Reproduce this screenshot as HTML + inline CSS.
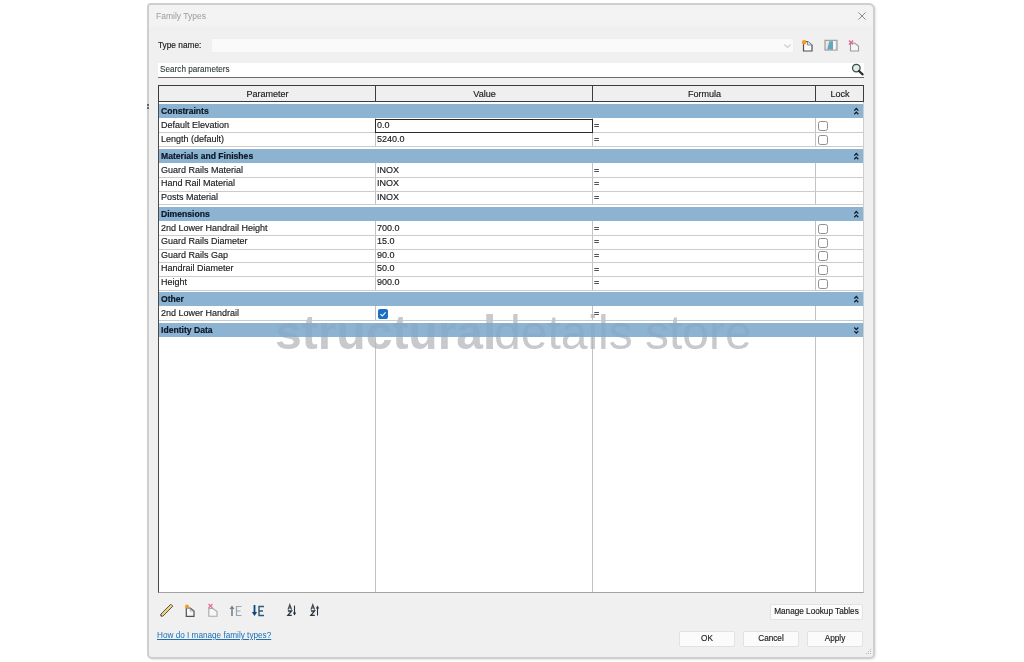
<!DOCTYPE html>
<html><head><meta charset="utf-8">
<style>
*{margin:0;padding:0;box-sizing:border-box}
html,body{width:1024px;height:662px;overflow:hidden;background:#fff;font-family:"Liberation Sans",sans-serif;font-size:10px;color:#1e1e1e}
.a{position:absolute}
#dlg{left:147px;top:3px;width:728px;height:656px;background:#f0f0f0;border:2px solid #cfcfcf;border-radius:4px 6px 5px 5px;box-shadow:1px 1px 2px rgba(0,0,0,0.10)}
.t{position:absolute;white-space:nowrap;line-height:12px}
.hdr{background:#efefef;border:1px solid #3c3c3c;}
.band{background:#8db3d3;height:14px}
.tx{font-size:9px;color:#1a1a1a;-webkit-text-stroke:0.15px #1a1a1a}
.bt{font-weight:bold;color:#0a1826;font-size:8.6px;-webkit-text-stroke:0.2px #0a1826}
.rl{height:1px;background:#cbcbcb}
.vl{width:1px;background:#c2c2c2}
.btn{background:#fbfbfb;border:1px solid #e2e2e2;border-radius:2px;text-align:center;line-height:14px;font-size:8.2px;color:#1a1a1a;white-space:nowrap;-webkit-text-stroke:0.15px #1a1a1a}
.cb{width:10px;height:10px;border:1.2px solid #8e8e8e;border-radius:2.5px;background:#fff}
.hd{font-size:9.05px;color:#1a1a1a;-webkit-text-stroke:0.15px #1a1a1a}
</style></head><body>
<div id="dlg" class="a"></div>
<div class="a" style="left:147px;top:103.5px;width:2px;height:2px;background:#444;border-radius:1px"></div><div class="a" style="left:147px;top:106.5px;width:2px;height:2px;background:#444;border-radius:1px"></div>
<div class="a" style="left:149px;top:5px;width:724px;height:21px;background:#f3f3f3;border-radius:3px 5px 0 0"></div>
<div class="t" style="left:156px;top:10px;color:#9b9b9b;font-size:8.5px">Family Types</div>
<svg class="a" style="left:857px;top:11px" width="10" height="10" viewBox="0 0 10 10"><path d="M1.4 1.4L8.6 8.6M8.6 1.4L1.4 8.6" stroke="#8c8c8c" stroke-width="1"/></svg>

<div class="t" style="left:158px;top:39px;font-size:8.3px;color:#1a1a1a;-webkit-text-stroke:0.15px #1a1a1a">Type name:</div>
<div class="a" style="left:211px;top:37.5px;width:583px;height:15px;background:#fafafa;border:1px solid #eeeeee"></div>
<svg class="a" style="left:783px;top:42.5px" width="9" height="6" viewBox="0 0 9 6"><path d="M1.3 1.5L4.5 4.5L7.7 1.5" stroke="#cdcdcd" stroke-width="1.2" fill="none"/></svg>
<svg class="a" style="left:798px;top:36px" width="18" height="18" viewBox="0 0 18 18">
<path d="M5.5 5.5H9.5L14 9V15H5.5Z" fill="#fafafa" stroke="#505050" stroke-width="1.2"/>
<path d="M9.5 5.5V9H14" fill="#dfe6ee" stroke="#6a7a8a" stroke-width="0.8"/>
<circle cx="6.2" cy="6.2" r="2.3" fill="#f39a2a"/>
</svg>
<svg class="a" style="left:822px;top:37px" width="18" height="16" viewBox="0 0 18 16">
<rect x="3" y="3.4" width="12" height="9.6" fill="#e8e8e8" stroke="#a4a4a4" stroke-width="1.3"/>
<path d="M5.2 12.6L7.3 4.3H11V12.6Z" fill="#64a6ba"/>
<rect x="11.5" y="4.2" width="1.6" height="8.3" fill="#fff"/>
</svg>
<svg class="a" style="left:845px;top:36px" width="18" height="18" viewBox="0 0 18 18">
<path d="M5.5 7H9.5L13.5 10V15H5.5Z" fill="#f6f6f6" stroke="#9a9a9a" stroke-width="1.1"/>
<path d="M4 4.5L8 8.5M8 4.5L4 8.5" stroke="#e06a8a" stroke-width="1.4"/>
</svg>

<div class="a" style="left:158px;top:63px;width:706px;height:15px;background:#fff;border-bottom:1px solid #6a6a6a"></div>
<div class="t" style="left:160px;top:64px;color:#2a3d33;font-size:8.2px;-webkit-text-stroke:0.1px #2a3d33">Search parameters</div>
<svg class="a" style="left:850px;top:62px" width="15" height="15" viewBox="0 0 15 15">
<circle cx="6.3" cy="6.1" r="3.8" fill="#d9efe8" stroke="#3d4b46" stroke-width="1.3"/>
<path d="M9 9L12.6 12.4" stroke="#2e2e2e" stroke-width="2.2" stroke-linecap="round"/>
</svg>

<div class="a" style="left:158px;top:101px;width:706px;height:492px;background:#fff;border:1px solid #4a4a4a;border-right-color:#cdcdcd;border-bottom-color:#a4a4a4;border-top:none"></div>
<div class="a hdr" style="left:158px;top:85px;width:706px;height:17px"></div>
<div class="a" style="left:375px;top:85px;width:1px;height:17px;background:#3c3c3c"></div>
<div class="a" style="left:592px;top:85px;width:1px;height:17px;background:#3c3c3c"></div>
<div class="a" style="left:815px;top:85px;width:1px;height:17px;background:#3c3c3c"></div>
<div class="t hd" style="left:159px;top:88px;width:217px;text-align:center">Parameter</div>
<div class="t hd" style="left:376px;top:88px;width:217px;text-align:center">Value</div>
<div class="t hd" style="left:593px;top:88px;width:223px;text-align:center">Formula</div>
<div class="t hd" style="left:815.5px;top:88px;width:49px;text-align:center">Lock</div>

<div class="a vl" style="left:375px;top:102px;height:490px"></div>
<div class="a vl" style="left:592px;top:102px;height:490px"></div>
<div class="a vl" style="left:815px;top:102px;height:490px"></div>
<div class="a band" style="left:159px;top:104.4px;width:704px"></div>
<div class="t bt" style="left:161px;top:105.4px">Constraints</div>
<svg class="a" style="left:853px;top:107.0px" width="7" height="9" viewBox="0 0 7 9"><path d="M1.3 3.6L3.3 1.5L5.3 3.6M1.3 7.2L3.3 5.1L5.3 7.2" stroke="#0d1b2a" stroke-width="1.25" fill="none"/></svg>
<div class="a" style="left:159px;top:147.02px;width:704px;height:1.98px;background:#fff"></div>
<div class="a rl" style="left:159px;top:132.36px;width:704px"></div>
<div class="t tx" style="left:161px;top:118.90px">Default Elevation</div>
<div class="t tx" style="left:377px;top:118.90px">0.0</div>
<div class="t tx" style="left:594px;top:119.10px">=</div>
<div class="a cb" style="left:818px;top:121.40px"></div>
<div class="a rl" style="left:159px;top:146.02px;width:704px"></div>
<div class="t tx" style="left:161px;top:132.56px">Length (default)</div>
<div class="t tx" style="left:377px;top:132.56px">5240.0</div>
<div class="t tx" style="left:594px;top:132.76px">=</div>
<div class="a cb" style="left:818px;top:135.06px"></div>
<div class="a band" style="left:159px;top:149px;width:704px"></div>
<div class="t bt" style="left:161px;top:150px">Materials and Finishes</div>
<svg class="a" style="left:853px;top:151.6px" width="7" height="9" viewBox="0 0 7 9"><path d="M1.3 3.6L3.3 1.5L5.3 3.6M1.3 7.2L3.3 5.1L5.3 7.2" stroke="#0d1b2a" stroke-width="1.25" fill="none"/></svg>
<div class="a" style="left:159px;top:205.28px;width:704px;height:1.72px;background:#fff"></div>
<div class="a rl" style="left:159px;top:176.96px;width:704px"></div>
<div class="t tx" style="left:161px;top:163.50px">Guard Rails Material</div>
<div class="t tx" style="left:377px;top:163.50px">INOX</div>
<div class="t tx" style="left:594px;top:163.70px">=</div>
<div class="a rl" style="left:159px;top:190.62px;width:704px"></div>
<div class="t tx" style="left:161px;top:177.16px">Hand Rail Material</div>
<div class="t tx" style="left:377px;top:177.16px">INOX</div>
<div class="t tx" style="left:594px;top:177.36px">=</div>
<div class="a rl" style="left:159px;top:204.28px;width:704px"></div>
<div class="t tx" style="left:161px;top:190.82px">Posts Material</div>
<div class="t tx" style="left:377px;top:190.82px">INOX</div>
<div class="t tx" style="left:594px;top:191.02px">=</div>
<div class="a band" style="left:159px;top:207px;width:704px"></div>
<div class="t bt" style="left:161px;top:208px">Dimensions</div>
<svg class="a" style="left:853px;top:209.6px" width="7" height="9" viewBox="0 0 7 9"><path d="M1.3 3.6L3.3 1.5L5.3 3.6M1.3 7.2L3.3 5.1L5.3 7.2" stroke="#0d1b2a" stroke-width="1.25" fill="none"/></svg>
<div class="a" style="left:159px;top:290.60px;width:704px;height:1.40px;background:#fff"></div>
<div class="a rl" style="left:159px;top:234.96px;width:704px"></div>
<div class="t tx" style="left:161px;top:221.50px">2nd Lower Handrail Height</div>
<div class="t tx" style="left:377px;top:221.50px">700.0</div>
<div class="t tx" style="left:594px;top:221.70px">=</div>
<div class="a cb" style="left:818px;top:224.00px"></div>
<div class="a rl" style="left:159px;top:248.62px;width:704px"></div>
<div class="t tx" style="left:161px;top:235.16px">Guard Rails Diameter</div>
<div class="t tx" style="left:377px;top:235.16px">15.0</div>
<div class="t tx" style="left:594px;top:235.36px">=</div>
<div class="a cb" style="left:818px;top:237.66px"></div>
<div class="a rl" style="left:159px;top:262.28px;width:704px"></div>
<div class="t tx" style="left:161px;top:248.82px">Guard Rails Gap</div>
<div class="t tx" style="left:377px;top:248.82px">90.0</div>
<div class="t tx" style="left:594px;top:249.02px">=</div>
<div class="a cb" style="left:818px;top:251.32px"></div>
<div class="a rl" style="left:159px;top:275.94px;width:704px"></div>
<div class="t tx" style="left:161px;top:262.48px">Handrail Diameter</div>
<div class="t tx" style="left:377px;top:262.48px">50.0</div>
<div class="t tx" style="left:594px;top:262.68px">=</div>
<div class="a cb" style="left:818px;top:264.98px"></div>
<div class="a rl" style="left:159px;top:289.60px;width:704px"></div>
<div class="t tx" style="left:161px;top:276.14px">Height</div>
<div class="t tx" style="left:377px;top:276.14px">900.0</div>
<div class="t tx" style="left:594px;top:276.34px">=</div>
<div class="a cb" style="left:818px;top:278.64px"></div>
<div class="a band" style="left:159px;top:292px;width:704px"></div>
<div class="t bt" style="left:161px;top:293px">Other</div>
<svg class="a" style="left:853px;top:294.6px" width="7" height="9" viewBox="0 0 7 9"><path d="M1.3 3.6L3.3 1.5L5.3 3.6M1.3 7.2L3.3 5.1L5.3 7.2" stroke="#0d1b2a" stroke-width="1.25" fill="none"/></svg>
<div class="a" style="left:159px;top:320.96px;width:704px;height:2.04px;background:#fff"></div>
<div class="a rl" style="left:159px;top:319.96px;width:704px"></div>
<div class="t tx" style="left:161px;top:306.50px">2nd Lower Handrail</div>
<div class="a" style="left:378px;top:308.50px;width:10px;height:10px;background:#1a6fc4;border-radius:2px"></div>
<svg class="a" style="left:378px;top:308.50px" width="10" height="10" viewBox="0 0 10 10"><path d="M2.5 5.2L4.3 7L7.6 3.3" stroke="#fff" stroke-width="1.1" fill="none"/></svg>
<div class="t tx" style="left:594px;top:306.70px">=</div>
<div class="a band" style="left:159px;top:323px;width:704px"></div>
<div class="t bt" style="left:161px;top:324px">Identity Data</div>
<svg class="a" style="left:853px;top:325.6px" width="7" height="9" viewBox="0 0 7 9"><path d="M1.3 1.5L3.3 3.6L5.3 1.5M1.3 5.1L3.3 7.2L5.3 5.1" stroke="#0d1b2a" stroke-width="1.25" fill="none"/></svg>
<div class="a" style="left:159px;top:102px;width:704px;height:2.2px;background:#fff"></div>
<div class="a" style="left:375px;top:118.5px;width:218px;height:14px;border:1.5px solid #2a2a2a"></div>

<div class="a" style="left:0;top:309px;line-height:48px;font-size:48px;color:rgb(208,210,214);mix-blend-mode:darken;z-index:5;white-space:nowrap">
<span class="a" style="left:275px;top:0;font-weight:bold">structural</span><span class="a" style="left:494px;top:0">details</span><span class="a" style="left:645px;top:0">store</span></div>
<div class="a" style="left:0;top:309px;line-height:48px;font-size:48px;color:rgba(110,115,125,0.09);z-index:6;white-space:nowrap">
<span class="a" style="left:275px;top:0;font-weight:bold">structural</span><span class="a" style="left:494px;top:0">details</span><span class="a" style="left:645px;top:0">store</span></div>

<svg class="a" style="left:158px;top:602px" width="18" height="16" viewBox="0 0 18 16">
<path d="M3.2 14.2L2.8 12.2L12.8 2.2L14.8 4.2L4.8 14.2Z" fill="#f2d27a" stroke="#555" stroke-width="1"/>
<path d="M3.2 14.2L3 12.5" stroke="#555" stroke-width="1"/>
</svg>
<svg class="a" style="left:180px;top:600px" width="18" height="18" viewBox="0 0 18 18">
<path d="M6.3 8H10.2L14 11V16.3H6.3Z" fill="#f8f8f8" stroke="#505050" stroke-width="1.2"/>
<path d="M10.2 8V11H14" fill="none" stroke="#8090a0" stroke-width="0.7"/>
<circle cx="7" cy="6.5" r="2" fill="#f39a2a"/>
</svg>
<svg class="a" style="left:203px;top:600px" width="18" height="18" viewBox="0 0 18 18">
<path d="M5.8 8.5H10L14 11.5V16.3H5.8Z" fill="#f6f6f6" stroke="#a8a8a8" stroke-width="1.1"/>
<path d="M5.5 4L9.5 8M9.5 4L5.5 8" stroke="#e07090" stroke-width="1.2"/>
</svg>
<svg class="a" style="left:228px;top:601px" width="16" height="16" viewBox="0 0 16 16">
<path d="M4 6V15" stroke="#7a8088" stroke-width="1.6"/><path d="M1.5 8L4 4.5L6.5 8Z" fill="#7a8088"/>
<path d="M13.5 5.5H8.5V14.5H13.5M8.5 10H12.5" stroke="#9aa4ac" stroke-width="1.2" fill="none"/>
</svg>
<svg class="a" style="left:250px;top:601px" width="16" height="16" viewBox="0 0 16 16">
<path d="M4.5 4V13" stroke="#12467a" stroke-width="1.8"/><path d="M1.8 11L4.5 15L7.2 11Z" fill="#12467a"/>
<path d="M14 5.5H9V14.5H14M9 10H13" stroke="#2a5a7a" stroke-width="1.4" fill="none"/>
</svg>
<svg class="a" style="left:284px;top:601px" width="16" height="17" viewBox="0 0 16 17">
<path d="M4 8.6L5.8 3.8L7.6 8.6M4.6 7H7" stroke="#3a4650" stroke-width="1.2" fill="none"/>
<path d="M3.9 10H7.6L3.9 14.4H7.8" stroke="#2a3440" stroke-width="1.3" fill="none"/>
<path d="M10.5 4.6V13.5" stroke="#2a3440" stroke-width="1.1"/><path d="M8.8 11.4L10.5 14.6L12.2 11.4Z" fill="#2a3440"/>
</svg>
<svg class="a" style="left:307px;top:601px" width="16" height="17" viewBox="0 0 16 17">
<path d="M4 8.6L5.8 3.8L7.6 8.6M4.6 7H7" stroke="#3a4650" stroke-width="1.2" fill="none"/>
<path d="M3.9 10H7.6L3.9 14.4H7.8" stroke="#2a3440" stroke-width="1.3" fill="none"/>
<path d="M10.5 6V14.6" stroke="#2a3440" stroke-width="1.1"/><path d="M8.8 7.6L10.5 4.5L12.2 7.6Z" fill="#2a3440"/>
</svg>
<div class="a btn" style="left:770px;top:604px;width:93px;height:16px">Manage Lookup Tables</div>
<div class="t" style="left:157px;top:630px;color:#1a6fb5;text-decoration:underline;font-size:8.2px">How do I manage family types?</div>
<div class="a btn" style="left:679px;top:631px;width:56px;height:16px">OK</div>
<div class="a btn" style="left:743px;top:631px;width:56px;height:16px">Cancel</div>
<div class="a btn" style="left:807px;top:631px;width:56px;height:16px">Apply</div>
<svg class="a" style="left:864px;top:648px" width="9" height="9" viewBox="0 0 9 9"><g fill="#b8b8b8"><rect x="6" y="1" width="1" height="1"/><rect x="4" y="3" width="1" height="1"/><rect x="6" y="3" width="1" height="1"/><rect x="2" y="5" width="1" height="1"/><rect x="4" y="5" width="1" height="1"/><rect x="6" y="5" width="1" height="1"/></g></svg>

</body></html>
